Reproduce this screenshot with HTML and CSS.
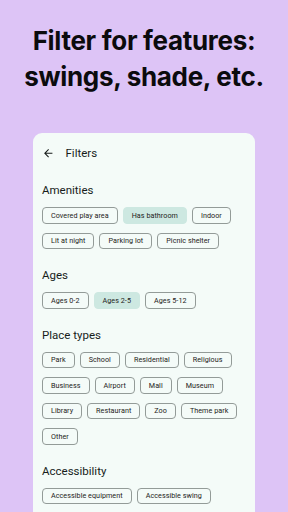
FILE: index.html
```html
<!DOCTYPE html>
<html lang="en">
<head>
    <meta charset="UTF-8">
    <meta name="viewport" content="width=device-width, initial-scale=1.0">
    <title>Filter for features</title>
    <link rel="stylesheet" href="styles.css">
</head>
<body>

    <h1 class="promo-title">Filter for features: swings, shade, etc.</h1>

    <div class="phone-card">
        <div class="top-bar">
            <svg class="back-icon" viewBox="0 0 24 24" aria-hidden="true">
                <path d="M20 11H7.83l5.59-5.59L12 4l-8 8 8 8 1.41-1.41L7.83 13H20v-2z"/>
            </svg>
            <div class="top-bar-title">Filters</div>
        </div>

        <div class="filter-section">
            <div class="section-title">Amenities</div>
            <div class="chip-group">
                <span class="chip">Covered play area</span>
                <span class="chip selected">Has bathroom</span>
                <span class="chip">Indoor</span>
                <span class="chip">Lit at night</span>
                <span class="chip">Parking lot</span>
                <span class="chip">Picnic shelter</span>
            </div>
        </div>

        <div class="filter-section">
            <div class="section-title">Ages</div>
            <div class="chip-group">
                <span class="chip">Ages 0-2</span>
                <span class="chip selected">Ages 2-5</span>
                <span class="chip">Ages 5-12</span>
            </div>
        </div>

        <div class="filter-section">
            <div class="section-title">Place types</div>
            <div class="chip-group">
                <span class="chip">Park</span>
                <span class="chip">School</span>
                <span class="chip">Residential</span>
                <span class="chip">Religious</span>
                <span class="chip">Business</span>
                <span class="chip">Airport</span>
                <span class="chip">Mall</span>
                <span class="chip">Museum</span>
                <span class="chip">Library</span>
                <span class="chip">Restaurant</span>
                <span class="chip">Zoo</span>
                <span class="chip">Theme park</span>
                <span class="chip">Other</span>
            </div>
        </div>

        <div class="filter-section">
            <div class="section-title">Accessibility</div>
            <div class="chip-group">
                <span class="chip">Accessible equipment</span>
                <span class="chip">Accessible swing</span>
            </div>
        </div>
    </div>

</body>
</html>
```

FILE: styles.css
```css
body {
    margin: 0;
    height: 512px;
    overflow: hidden;
    background: #ddc4f6;
    font-family: Roboto, "Noto Sans", sans-serif;
    color: #171d1b;
}

.promo-title {
    margin: 0;
    padding: 23px 10px 0;
    height: 109px;
    box-sizing: border-box;
    font-family: Inter, "Noto Sans", sans-serif;
    font-size: 26px;
    font-weight: 700;
    line-height: 36px;
    letter-spacing: -0.3px;
    text-align: center;
    color: #0b0b0d;
}

.phone-card {
    margin: 24px 0 0 33px;
    width: 222px;
    height: 400px;
    box-sizing: border-box;
    padding: 0 9px;
    background: #f4fbf8;
    border-radius: 9px 9px 0 0;
}

.top-bar {
    height: 40px;
    display: flex;
    align-items: center;
}

.back-icon {
    width: 12.5px;
    height: 12.5px;
    fill: #171d1b;
    margin-right: 11px;
}

.top-bar-title {
    font-size: 11.5px;
    line-height: 14px;
}

.filter-section {
    margin-top: 10px;
}

.filter-section + .filter-section {
    margin-top: 19px;
}

.section-title {
    font-size: 11.5px;
    line-height: 14px;
    margin-bottom: 10px;
}

.chip-group {
    display: flex;
    flex-wrap: wrap;
    gap: 9px 5px;
}

.chip {
    height: 16.5px;
    box-sizing: border-box;
    padding: 0 8px;
    display: flex;
    align-items: center;
    border: 1px solid #939b98;
    border-radius: 4px;
    font-size: 7.2px;
    font-weight: 400;
    letter-spacing: 0.05px;
    color: #1d2220;
    white-space: nowrap;
}

.chip.selected {
    background: #cde8e1;
    border-color: #cde8e1;
}
```
